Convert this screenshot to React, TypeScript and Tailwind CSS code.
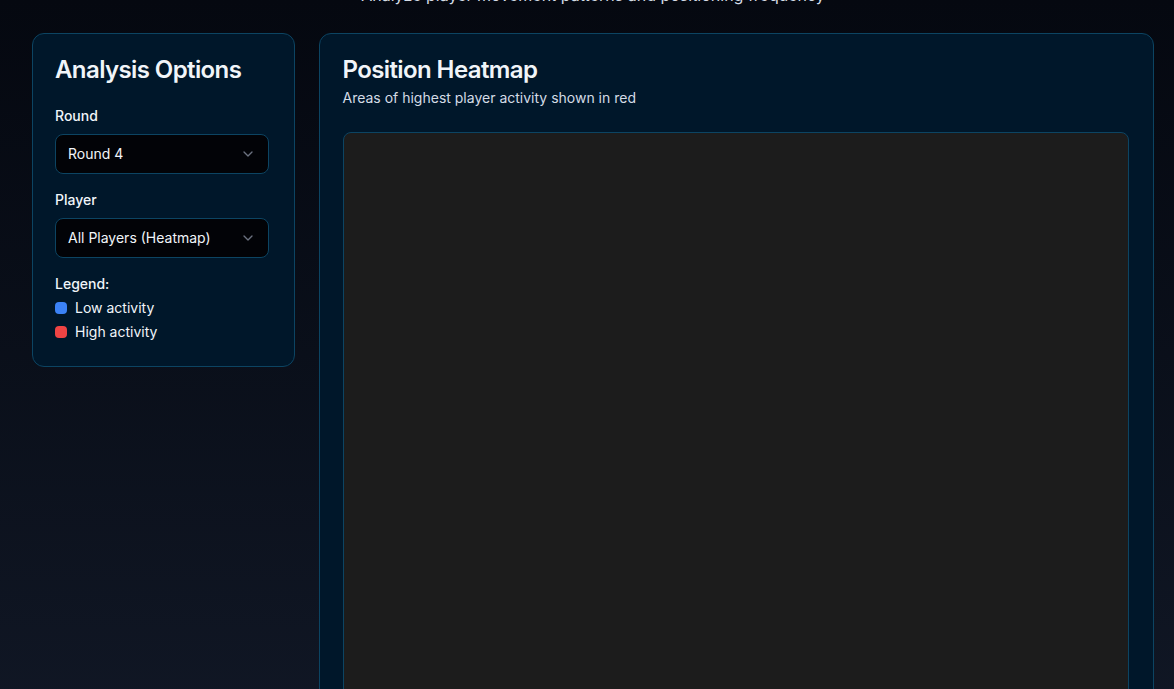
import React from "react";
import { ChevronDown } from "lucide-react";

function SelectBox({ value }: { value: string }) {
  return (
    <div className="flex h-10 w-full items-center justify-between rounded-lg border border-[#0c4462] bg-[#020307] px-3 text-sm text-[#f1f5f9]">
      <span>{value}</span>
      <ChevronDown size={16} className="text-[#6b7280]" strokeWidth={2} />
    </div>
  );
}

export default function App() {
  return (
    <div
      className="min-h-screen overflow-hidden bg-gradient-to-b from-[#050810] to-[#131a29] text-white"
      style={{ fontFamily: "Inter, 'Noto Sans', sans-serif" }}
    >
      <div className="ml-8 w-[1122px]">
        <div className="-mt-[17px] text-center text-base leading-6 text-[#d4dce6]">
          Analyze player movement patterns and positioning frequency
        </div>
        <div className="mt-[26px] grid grid-cols-4 items-start gap-6">
          <div className="col-span-1 rounded-xl border border-[#0c4462] bg-[#00172a] pb-6 pl-[22px] pr-[25px] pt-6">
            <h2 className="text-2xl font-semibold leading-none tracking-tight text-[#f1f5f9]">
              Analysis Options
            </h2>
            <div className="mt-6">
              <div className="mb-2 text-sm font-medium leading-5 text-[#f1f5f9]">Round</div>
              <SelectBox value="Round 4" />
            </div>
            <div className="mt-4">
              <div className="mb-2 text-sm font-medium leading-5 text-[#f1f5f9]">Player</div>
              <SelectBox value="All Players (Heatmap)" />
            </div>
            <div className="mt-4">
              <div className="text-sm font-medium leading-5 text-[#f1f5f9]">Legend:</div>
              <div className="mt-1 flex flex-col gap-1">
                <div className="flex items-center gap-2 text-sm leading-5 text-[#f1f5f9]">
                  <span className="h-3 w-3 rounded bg-[#3b82f6]" />
                  <span>Low activity</span>
                </div>
                <div className="flex items-center gap-2 text-sm leading-5 text-[#f1f5f9]">
                  <span className="h-3 w-3 rounded bg-[#ef4444]" />
                  <span>High activity</span>
                </div>
              </div>
            </div>
          </div>
          <div className="col-span-3 rounded-xl border border-[#0c4462] bg-[#00172a] pb-6 pl-[23px] pr-6 pt-6">
            <h2 className="text-2xl font-semibold leading-none tracking-tight text-[#f1f5f9]">
              Position Heatmap
            </h2>
            <p className="mt-[6px] text-sm leading-5 text-[#d4dce6]">
              Areas of highest player activity shown in red
            </p>
            <div className="mt-6 h-[700px] w-full rounded-lg border border-[#0c4462] bg-[#1c1c1c]" />
          </div>
        </div>
      </div>
    </div>
  );
}
